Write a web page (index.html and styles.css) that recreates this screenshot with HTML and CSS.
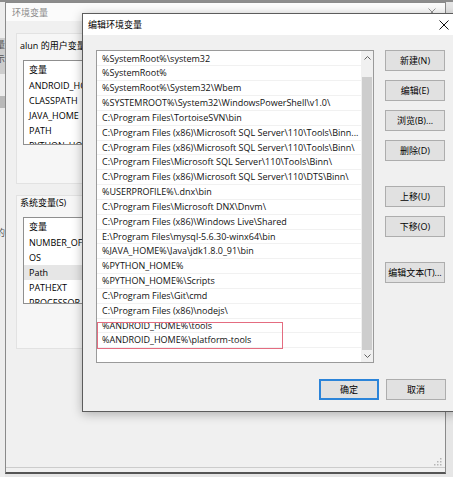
FILE: index.html
```html
<!DOCTYPE html>
<html lang="zh-CN">
<head>
<meta charset="utf-8">
<title>编辑环境变量</title>
<link rel="stylesheet" href="styles.css">
</head>
<body>
<div class="desk">
  <div class="topbar"></div>
  <div class="side">
    <div class="side-band"><span>量</span><span>示</span></div>
    <div class="side-block"></div>
    <div class="side-text">的</div>
  </div>

  <div class="env">
    <div class="env-title">
      <span class="env-name">环境变量</span>
      <svg class="env-x" width="8" height="8" viewBox="0 0 8 8"><path d="M0.5 0.5L7.5 7.5M7.5 0.5L0.5 7.5" stroke="#9a9a9a" stroke-width="1" fill="none"/></svg>
    </div>
    <div class="env-body">
      <section class="panel p1">
        <div class="plabel">alun 的用户变量</div>
        <div class="vlist l1">
          <div class="vhead">变量</div>
          <div class="vrow">ANDROID_HOME</div>
          <div class="vrow">CLASSPATH</div>
          <div class="vrow">JAVA_HOME</div>
          <div class="vrow">PATH</div>
          <div class="vrow">PYTHON_HOME</div>
        </div>
      </section>
      <section class="panel p2">
        <div class="plabel">系统变量(S)</div>
        <div class="vlist l2">
          <div class="vhead">变量</div>
          <div class="vrow">NUMBER_OF_PROCESSORS</div>
          <div class="vrow">OS</div>
          <div class="vrow sel">Path</div>
          <div class="vrow">PATHEXT</div>
          <div class="vrow">PROCESSOR_ARCHITECTURE</div>
        </div>
      </section>
    </div>
    <div class="env-foot"></div>
    <svg class="grip" width="8" height="8" viewBox="0 0 8 8"><g fill="#b5b5b5"><rect x="6" y="0" width="1.5" height="1.5"/><rect x="3" y="3" width="1.5" height="1.5"/><rect x="6" y="3" width="1.5" height="1.5"/><rect x="0" y="6" width="1.5" height="1.5"/><rect x="3" y="6" width="1.5" height="1.5"/><rect x="6" y="6" width="1.5" height="1.5"/></g></svg>
  </div>

  <div class="dlg">
    <div class="dlg-title">
      <span class="dlg-name">编辑环境变量</span>
      <svg class="dlg-x" width="10" height="10" viewBox="0 0 10 10"><path d="M0.5 0.5L9.5 9.5M9.5 0.5L0.5 9.5" stroke="#111" stroke-width="1" fill="none"/></svg>
    </div>
    <div class="dlg-body">
      <div class="dlg-main">
        <div class="plist">
          <div class="prows">
            <div class="prow">%SystemRoot%\system32</div>
            <div class="prow">%SystemRoot%</div>
            <div class="prow">%SystemRoot%\System32\Wbem</div>
            <div class="prow">%SYSTEMROOT%\System32\WindowsPowerShell\v1.0\</div>
            <div class="prow">C:\Program Files\TortoiseSVN\bin</div>
            <div class="prow">C:\Program Files (x86)\Microsoft SQL Server\110\Tools\Binn...</div>
            <div class="prow">C:\Program Files (x86)\Microsoft SQL Server\110\Tools\Binn\</div>
            <div class="prow">C:\Program Files\Microsoft SQL Server\110\Tools\Binn\</div>
            <div class="prow">C:\Program Files (x86)\Microsoft SQL Server\110\DTS\Binn\</div>
            <div class="prow">%USERPROFILE%\.dnx\bin</div>
            <div class="prow">C:\Program Files\Microsoft DNX\Dnvm\</div>
            <div class="prow">C:\Program Files (x86)\Windows Live\Shared</div>
            <div class="prow">E:\Program Files\mysql-5.6.30-winx64\bin</div>
            <div class="prow">%JAVA_HOME%\Java\jdk1.8.0_91\bin</div>
            <div class="prow">%PYTHON_HOME%</div>
            <div class="prow">%PYTHON_HOME%\Scripts</div>
            <div class="prow">C:\Program Files\Git\cmd</div>
            <div class="prow">C:\Program Files (x86)\nodejs\</div>
            <div class="prow">%ANDROID_HOME%\tools</div>
            <div class="prow">%ANDROID_HOME%\platform-tools</div>
          </div>
          <div class="sbar">
            <div class="sarrow up"><svg width="7" height="4" viewBox="0 0 7 4"><path d="M0.5 3.5L3.5 0.5L6.5 3.5" stroke="#606060" stroke-width="1" fill="none"/></svg></div>
            <div class="sgap"></div>
            <div class="sthumb"></div>
            <div class="sarrow down"><svg width="7" height="4" viewBox="0 0 7 4"><path d="M0.5 0.5L3.5 3.5L6.5 0.5" stroke="#606060" stroke-width="1" fill="none"/></svg></div>
          </div>
          <div class="mark"></div>
        </div>
        <div class="btns">
          <div class="btn">新建(N)</div>
          <div class="btn">编辑(E)</div>
          <div class="btn">浏览(B)...</div>
          <div class="btn">删除(D)</div>
          <div class="btn gap">上移(U)</div>
          <div class="btn">下移(O)</div>
          <div class="btn gap">编辑文本(T)...</div>
        </div>
      </div>
      <div class="dlg-foot">
        <div class="btn ok">确定</div>
        <div class="btn">取消</div>
      </div>
    </div>
  </div>
</div>
</body>
</html>
```

FILE: styles.css
```css
html, body {
  margin: 0;
  padding: 0;
}

.desk {
  position: relative;
  width: 453px;
  height: 477px;
  overflow: hidden;
  background: #e6e6e6;
  font-family: "Open Sans", "Noto Sans CJK SC", sans-serif;
  font-size: 9px;
  color: #000;
}

.topbar {
  position: absolute;
  left: 0;
  top: 0;
  width: 453px;
  height: 2px;
  background: #8c8c8c;
}

/* sliver of another window at the far left */
.side {
  position: absolute;
  left: 0;
  top: 2px;
  width: 5px;
  height: 475px;
  background: #ededed;
  overflow: hidden;
}
.side-band {
  margin-top: 36px;
  height: 36px;
  background: #cdcdcd;
  display: flex;
  flex-direction: column;
  color: #555;
  line-height: 14px;
  text-indent: -4px;
}
.side-block {
  margin-top: 22px;
  height: 12px;
  background: #b9b9b9;
}
.side-text {
  margin-top: 118px;
  color: #555;
  text-indent: -4px;
}

/* background window: 环境变量 */
.env {
  position: absolute;
  left: 5px;
  top: 2px;
  width: 441px;
  height: 472px;
  box-sizing: border-box;
  border: 1px solid #8a8a8a;
  border-bottom: 2px solid #555;
  background: #f0f0f0;
  display: flex;
  flex-direction: column;
}
.env-title {
  height: 18px;
  flex: none;
  background: #fbfbfb;
  display: flex;
  align-items: center;
  justify-content: space-between;
  padding: 0 9px 0 6px;
  color: #8a8a8a;
}
.env-body {
  flex: 1;
  padding: 12px 0 0 10px;
  display: flex;
  flex-direction: column;
  gap: 11px;
}
.env-foot {
  height: 4px;
  flex: none;
  border-top: 1px solid #cccccc;
}
.grip {
  position: absolute;
  right: 3px;
  bottom: 6px;
}

.panel {
  width: 420px;
  box-sizing: border-box;
  background: #f6f6f6;
  border: 1px solid #e2e2e2;
  padding-left: 3px;
}
.p1 {
  height: 151px;
  padding-top: 5px;
}
.p2 {
  height: 154px;
  padding-top: 0;
}
.plabel {
  line-height: 14px;
  height: 14px;
  white-space: nowrap;
}
.vlist {
  margin: 7px 0 0 3px;
  width: 68px;
  box-sizing: border-box;
  border: 1px solid #8f8f8f;
  background: #fff;
  overflow: hidden;
}
.l1 { height: 85px; }
.l2 { height: 87px; }
.vhead {
  height: 17px;
  line-height: 17px;
  padding-left: 5px;
}
.vrow {
  height: 15px;
  line-height: 15px;
  padding-left: 5px;
  white-space: nowrap;
  overflow: hidden;
}
.vrow.sel {
  background: #e6e6e6;
}

/* foreground dialog: 编辑环境变量 */
.dlg {
  position: absolute;
  left: 82px;
  top: 13px;
  width: 376px;
  box-sizing: border-box;
  border: 1px solid #5c5c5c;
  background: #f0f0f0;
  box-shadow: 0 2px 10px rgba(0, 0, 0, 0.28);
}
.dlg-title {
  height: 21px;
  background: #fff;
  display: flex;
  align-items: center;
  justify-content: space-between;
  padding: 0 8px 0 5px;
}
.dlg-body {
  padding: 15px 11px 11px 13px;
  display: flex;
  flex-direction: column;
  gap: 16px;
}
.dlg-main {
  display: flex;
  gap: 11px;
  align-items: flex-start;
}

.plist {
  position: relative;
  width: 278px;
  height: 313px;
  box-sizing: border-box;
  border: 1px solid #9a9a9a;
  background: #fff;
  display: flex;
}
.prows {
  flex: 1;
  min-width: 0;
  padding-top: 0.6px;
}
.prow {
  height: 14.83px;
  line-height: 14.83px;
  box-sizing: border-box;
  padding-left: 5px;
  border-bottom: 1px solid #f1f1f1;
  white-space: nowrap;
  overflow: hidden;
  color: #111;
}
.sbar {
  width: 12px;
  flex: none;
  background: #f0f0f0;
  display: flex;
  flex-direction: column;
}
.sarrow {
  display: flex;
  align-items: center;
  justify-content: center;
}
.sarrow.up { height: 13px; }
.sarrow.down { height: 12px; }
.sgap { height: 13px; }
.sthumb {
  height: 273px;
  margin: 0 1px;
  background: #cdcdcd;
}
.mark {
  position: absolute;
  left: 0;
  top: 271px;
  width: 186px;
  height: 27px;
  box-sizing: border-box;
  border: 1px solid #e46c80;
}

.btns {
  display: flex;
  flex-direction: column;
  gap: 9px;
}
.btn {
  width: 60px;
  height: 21px;
  box-sizing: border-box;
  border: 1px solid #adadad;
  background: #e1e1e1;
  display: flex;
  align-items: center;
  justify-content: center;
  white-space: nowrap;
}
.btn.gap {
  margin-top: 16px;
}
.dlg-foot {
  display: flex;
  justify-content: flex-end;
  gap: 7px;
}
.btn.ok {
  border-color: #2b84d9;
  box-shadow: inset 0 0 0 1px #2b84d9;
}
```
